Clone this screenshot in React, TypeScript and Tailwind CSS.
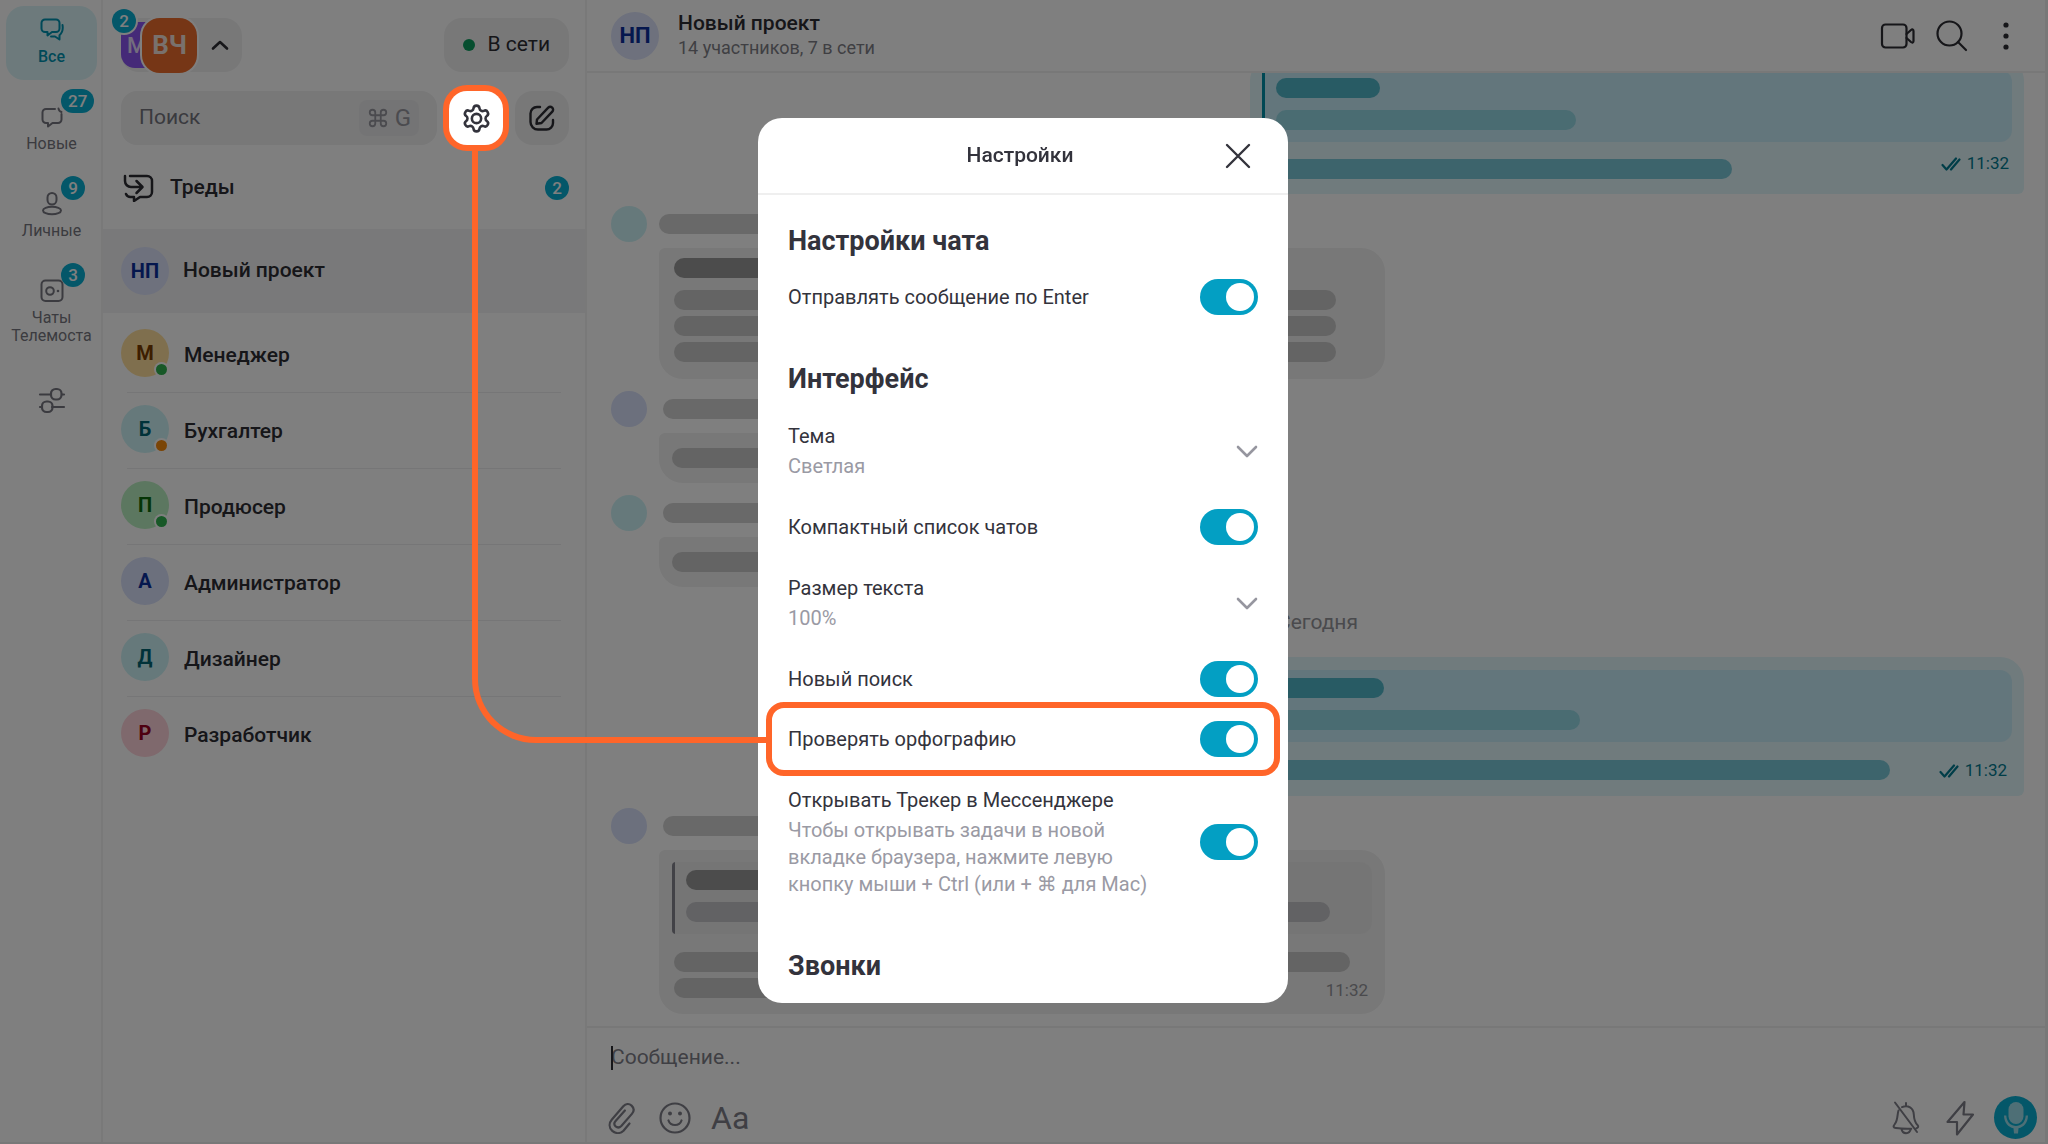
import { useState } from 'react'
import type { ReactNode } from 'react'
import clsx from 'clsx'

interface Chat {
  initials: string
  name: string
  color: string
  status?: string
}

const chats: Chat[] = [
  { initials: 'М', name: 'Менеджер', color: 'bg-[#ffdf9c] text-[#7a3c00]', status: 'bg-[#2fb14f]' },
  { initials: 'Б', name: 'Бухгалтер', color: 'bg-[#cdf3f6] text-[#006472]', status: 'bg-[#f58a0c]' },
  { initials: 'П', name: 'Продюсер', color: 'bg-[#b9efc0] text-[#0a6a0a]', status: 'bg-[#2fb14f]' },
  { initials: 'А', name: 'Администратор', color: 'bg-[#d8e0fb] text-[#0b2f9c]' },
  { initials: 'Д', name: 'Дизайнер', color: 'bg-[#cdf3f6] text-[#006472]' },
  { initials: 'Р', name: 'Разработчик', color: 'bg-[#ffd2da] text-[#9c0022]' },
]

interface IconProps {
  children: ReactNode
  size?: string
  box?: string
  stroke?: number
}

function Icon({ children, size = 'size-6', box = '0 0 24 24', stroke = 2 }: IconProps) {
  return (
    <svg
      viewBox={box}
      className={clsx('shrink-0', size)}
      fill="none"
      stroke="currentColor"
      strokeWidth={stroke}
      strokeLinecap="round"
      strokeLinejoin="round"
      aria-hidden="true"
    >
      {children}
    </svg>
  )
}

function Badge({ children, className }: { children: ReactNode; className?: string }) {
  return (
    <span
      className={clsx(
        'flex h-6 min-w-6 items-center justify-center rounded-full bg-[#08afd2] text-[17px] leading-6 font-medium text-white',
        className,
      )}
    >
      {children}
    </span>
  )
}

interface RailItemProps {
  label: string
  icon: ReactNode
  count?: number
  active?: boolean
}

function RailItem({ label, icon, count, active }: RailItemProps) {
  return (
    <button
      className={clsx(
        'relative flex min-h-[74px] w-full flex-col items-center gap-1.5 rounded-[18px] pt-3 text-base leading-[18px]',
        active ? 'bg-[#daf5f9] font-medium text-[#0092b0]' : 'text-[#777780]',
      )}
    >
      {icon}
      <span>{label}</span>
      {count && <Badge className="absolute -top-1 left-[55px] px-[7px]">{count}</Badge>}
    </button>
  )
}

function Rail() {
  return (
    <nav className="flex w-[103px] shrink-0 flex-col gap-[13px] border-r-2 border-[#f2f2f2] pt-1.5 pr-1 pl-1.5">
      <RailItem
        active
        label="Все"
        icon={
          <Icon>
            <path d="M5 1.5h11a3.5 3.5 0 0 1 3.5 3.5v5.5a3.5 3.5 0 0 1-3.5 3.5h-4l-4.500 3.500v-3.500H5A3.500 3.500 0 0 1 1.500 10.500V5A3.500 3.500 0 0 1 5 1.500z" />
            <path d="M22.500 7c.7 4.500.6 7.500-3 10.200V21.500l-4.500-3h-4" />
          </Icon>
        }
      />
      <RailItem
        label="Новые"
        count={27}
        icon={
          <Icon>
            <path d="M15 4H6a3.500 3.500 0 0 0-3.500 3.500v7A3.500 3.500 0 0 0 6 18h2v3.500l4.500-3.500H18a3.500 3.500 0 0 0 3.500-3.500V9" />
            <path d="M18.500 3.500c.2 1.800 1 2.800 3 3.500" />
          </Icon>
        }
      />
      <RailItem
        label="Личные"
        count={9}
        icon={
          <Icon>
            <rect x="7.500" y="1" width="9" height="11.500" rx="4.500" />
            <ellipse cx="12" cy="18.500" rx="9" ry="3.800" />
          </Icon>
        }
      />
      <RailItem
        label="Чаты Телемоста"
        count={3}
        icon={
          <Icon>
            <rect x="1.500" y="1.500" width="21" height="20.500" rx="4" />
            <circle cx="10" cy="12" r="3.800" />
            <circle cx="18" cy="12" r="1.300" fill="currentColor" stroke="none" />
          </Icon>
        }
      />
      <button className="mt-7 flex justify-center text-[#777780]" aria-label="Настроить папки">
        <Icon size="size-7" box="0 0 28 28" stroke={2.2}>
          <path d="M2 8.500h11M24 8.500h2M2 21h1M14 21h12" />
          <rect x="13" y="3" width="10.500" height="10.500" rx="4.500" />
          <rect x="4" y="15.500" width="10.500" height="10.500" rx="4.500" />
        </Icon>
      </button>
    </nav>
  )
}

function SidebarHeader() {
  return (
    <div className="flex flex-col gap-[19px] pt-[18px] pr-4 pl-[18px]">
      <div className="flex items-center justify-between">
        <button
          className="relative flex h-[54px] w-[121px] items-center rounded-[18px] bg-[#f0f0f1] text-[#2c2c33]"
          aria-label="Аккаунты"
        >
          <span className="flex h-[46px] w-[27px] items-center overflow-hidden rounded-l-[14px] bg-[#8a54f0] pl-1.5 text-[22px] font-medium text-[#e6dcfb]">
            М
          </span>
          <span className="-ml-[6px] flex size-[55px] shrink-0 items-center justify-center rounded-[18px] bg-[#ed6c2c] text-[26px] font-bold text-[#f2e2da] ring-2 ring-white">
            ВЧ
          </span>
          <span className="ml-3.5">
            <Icon size="w-[18px] h-3" box="0 0 18 12" stroke={2.6}>
              <path d="M2 9.500L9 3l7 6.500" />
            </Icon>
          </span>
          <Badge className="absolute -top-[9px] -left-[9px] ring-2 ring-white">2</Badge>
        </button>
        <button className="flex h-[54px] items-center gap-3 rounded-[18px] bg-[#f0f0f1] px-[19px] text-[21px] text-[#2c2c33]">
          <span className="size-3 rounded-full bg-[#0c9c5e]" />
          В сети
        </button>
      </div>

      <div className="flex items-center gap-3">
        <div className="flex h-[54px] min-w-0 flex-1 items-center rounded-[16px] bg-[#f0f0f1] pr-[18px] pl-[18px]">
          <input
            type="search"
            aria-label="Поиск"
            placeholder="Поиск"
            className="min-w-0 flex-1 bg-transparent text-[21px] outline-none placeholder:text-[#74747d]"
          />
          <kbd className="flex h-9 items-center gap-1.5 rounded-lg bg-[#e9e9eb] px-2 font-[Roboto,'DejaVu_Sans',sans-serif] text-2xl text-[#97979f]">
            <Icon size="size-[22px]" box="0 0 24 24">
              <path d="M15 6v12a3 3 0 1 0 3-3H6a3 3 0 1 0 3 3V6a3 3 0 1 0-3 3h12a3 3 0 1 0-3-3" />
            </Icon>
            G
          </kbd>
        </div>
        <button
          className="relative z-20 flex size-[54px] items-center justify-center rounded-[18px] bg-white text-[#33333c] ring-6 ring-[#ff6529]"
          aria-label="Настройки"
        >
          <Icon size="size-[31px]">
            <path d="M9.671 4.136a2.340 2.340 0 0 1 4.659 0 2.340 2.340 0 0 0 3.319 1.915 2.340 2.340 0 0 1 2.330 4.033 2.340 2.340 0 0 0 0 3.831 2.340 2.340 0 0 1-2.330 4.033 2.340 2.340 0 0 0-3.319 1.915 2.340 2.340 0 0 1-4.659 0 2.340 2.340 0 0 0-3.320-1.915 2.340 2.340 0 0 1-2.330-4.033 2.340 2.340 0 0 0 0-3.831A2.340 2.340 0 0 1 6.350 6.051a2.340 2.340 0 0 0 3.319-1.915" />
            <circle cx="12" cy="12" r="3.600" />
          </Icon>
        </button>
        <button
          className="flex size-[54px] items-center justify-center rounded-[18px] bg-[#f0f0f1] text-[#2c2c33]"
          aria-label="Новый чат"
        >
          <Icon size="size-7" box="0 0 28 28" stroke={2.4}>
            <path d="M12 3H9a6.500 6.500 0 0 0-6.500 6.500V18A7.500 7.500 0 0 0 10 25.500h8.500A6.500 6.500 0 0 0 25 19v-3" />
            <path d="M9 15.500L20.200 3.700a2.800 2.800 0 0 1 4.100 3.900L13.500 19 8.500 19.800z" />
          </Icon>
        </button>
      </div>
    </div>
  )
}

function ChatList() {
  return (
    <div className="mt-4 text-[21px] font-medium text-[#2c2c33]">
      <button className="flex h-[68px] w-full items-center pr-4 pb-3.5 pl-[18px]">
        <Icon size="w-8 h-7 ml-0.5" box="0 0 32 28" stroke={2.5}>
          <path d="M7 2h17a5 5 0 0 1 5 5v11a5 5 0 0 1-5 5h-7l-6 4v-4H8a5 5 0 0 1-5-3" />
          <path d="M2 2v5a6 6 0 0 0 6 6h11M13.500 7l6 6-6 6" />
        </Icon>
        <span className="ml-[15px]">Треды</span>
        <Badge className="ml-auto">2</Badge>
      </button>

      <button className="flex h-[84px] w-full items-center gap-3.5 bg-[#f3f3f4] px-[18px]">
        <span className="flex size-12 items-center justify-center rounded-full bg-[#dce2fb] text-xl font-bold text-[#0b2f9c]">
          НП
        </span>
        Новый проект
      </button>

      <ul className="mt-1">
        {chats.map((chat, i) => (
          <li key={chat.name} className="relative">
            <button className="flex h-[76px] w-full items-center gap-[15px] px-[18px]">
              <span
                className={clsx(
                  'relative mt-3 flex size-12 items-center justify-center self-start rounded-full text-xl font-bold',
                  chat.color,
                )}
              >
                {chat.initials}
                {chat.status && (
                  <span className={clsx('absolute right-0.5 bottom-0.5 size-[11px] rounded-full ring-2 ring-white', chat.status)} />
                )}
              </span>
              <span className="pt-0.5">{chat.name}</span>
            </button>
            {i < chats.length - 1 && <hr className="absolute right-6 bottom-0 left-6 border-[#ececee]" />}
          </li>
        ))}
      </ul>
    </div>
  )
}

function Pill({ className }: { className: string }) {
  return <div className={clsx('h-5 shrink-0 rounded-full', className)} />
}

function Quote({ accent, children }: { accent: string; children: ReactNode }) {
  return (
    <div className={clsx('flex h-[72px] overflow-hidden rounded-l-[4px] rounded-r-xl', accent)}>
      <div className="w-[3px] shrink-0 bg-current" />
      <div className="flex flex-col gap-3 pt-2 pl-[11px]">{children}</div>
    </div>
  )
}

function Incoming({ avatar, name, bubble, children }: { avatar: string; name: string; bubble: string; children: ReactNode }) {
  return (
    <article className="flex items-start gap-3">
      <div className={clsx('size-9 shrink-0 rounded-full', avatar)} />
      <div className="flex min-w-0 flex-col">
        <Pill className={clsx('mt-2 bg-[#d2d2d2]', name)} />
        <div className={clsx('mt-3.5 max-w-full rounded-[24px] rounded-tl-md bg-[#f0f0f0]', bubble)}>{children}</div>
      </div>
    </article>
  )
}

function Outgoing({ author, quote, text, time }: { author: string; quote: string; text: string; time: string }) {
  return (
    <article className="w-[774px] max-w-full self-end rounded-[24px] rounded-br-md bg-[#e0f6fa] px-3 pt-[13px] pb-[15px]">
      <Quote accent="bg-[#c7ecf8] text-[#0090a8]">
        <Pill className={clsx('bg-[#51b7c9]', author)} />
        <Pill className={clsx('bg-[#94d8e4]', quote)} />
      </Quote>
      <div className="mt-[17px] flex items-center justify-between">
        <Pill className={clsx('bg-[#7bc9d9]', text)} />
        <div className={clsx('flex h-5 items-center gap-1.5 text-[17px] text-[#007a90]', time)}>
          <Icon size="w-5 h-3.5" box="0 0 20 14" stroke={2.2}>
            <path d="M1.500 8L5.500 12.500 15 1.500M10 12.500L18.500 2.500" />
          </Icon>
          <time>11:32</time>
        </div>
      </div>
    </article>
  )
}

function Conversation() {
  return (
    <section className="flex min-h-0 flex-1 flex-col justify-end gap-3 overflow-hidden pr-[21px] pb-3 pl-6">
      <Outgoing author="w-[104px]" quote="w-[300px]" text="w-[470px]" time="-mt-2.5 mr-[3px]" />

      <Incoming avatar="bg-[#cdf3f6]" name="w-[240px]" bubble="flex h-[131px] w-[726px] flex-col gap-1.5 pt-2.5 pl-[15px]">
        <Pill className="mb-1.5 w-[220px] bg-[#999]" />
        <Pill className="w-[662px] bg-[#c8c8c8]" />
        <Pill className="w-[662px] bg-[#c8c8c8]" />
        <Pill className="w-[662px] bg-[#c8c8c8]" />
      </Incoming>

      <Incoming avatar="bg-[#d8e0fb]" name="ml-1 w-[240px]" bubble="w-[420px] px-[13px] py-[15px]">
        <Pill className="w-full bg-[#c8c8c8]" />
      </Incoming>

      <Incoming avatar="bg-[#cdf3f6]" name="ml-1 w-[240px]" bubble="w-[420px] px-[13px] py-[15px]">
        <Pill className="w-full bg-[#c8c8c8]" />
      </Incoming>

      <p className="py-[9px] text-center text-[21px] leading-7 text-[#94949a]">Сегодня</p>

      <Outgoing author="w-[108px]" quote="w-[304px]" text="w-[628px]" time="mt-0.5 mr-[5px]" />

      <Incoming avatar="bg-[#d8e0fb]" name="ml-1 w-[240px]" bubble="h-[164px] w-[726px] px-[13px] pt-3">
        <Quote accent="bg-[#ebebeb] text-[#84848f]">
          <Pill className="w-[220px] bg-[#999]" />
          <Pill className="w-[644px] bg-[#c4c4c8]" />
        </Quote>
        <div className="mt-[18px] ml-0.5 flex flex-col gap-1.5">
          <Pill className="w-[676px] bg-[#c8c8c8]" />
          <div className="flex items-center justify-between pr-1">
            <Pill className="w-[440px] bg-[#c8c8c8]" />
            <time className="h-5 text-[17px] text-[#94949a]">11:32</time>
          </div>
        </div>
      </Incoming>
    </section>
  )
}

function ChatHeader() {
  return (
    <header className="flex h-[73px] shrink-0 items-center border-b-2 border-[#f0f0f0] pr-[21px] pl-6 text-[#2c2c33]">
      <span className="flex size-12 items-center justify-center rounded-full bg-[#dce2fb] text-[22px] font-bold text-[#0b2f9c]">
        НП
      </span>
      <div className="ml-[19px]">
        <h1 className="text-[21px] leading-6 font-medium">Новый проект</h1>
        <p className="pt-px text-lg leading-6 text-[#7e7e86]">14 участников, 7 в сети</p>
      </div>
      <div className="ml-auto flex items-center gap-5">
        <button aria-label="Видеозвонок">
          <Icon size="size-9" box="0 0 36 36" stroke={2.2}>
            <rect x="2" y="6.500" width="24.500" height="23" rx="3.500" />
            <path d="M26.500 16l4.500-4c1.300-1 2.500-.5 2.500 1v10c0 1.500-1.200 2-2.500 1l-4.500-4" />
          </Icon>
        </button>
        <button aria-label="Поиск по чату">
          <Icon size="size-8" box="0 0 32 32" stroke={2.2}>
            <circle cx="13.500" cy="13.500" r="12" />
            <path d="M22 22l8 8" />
          </Icon>
        </button>
        <button aria-label="Меню">
          <Icon size="size-9" box="0 0 36 36" stroke={0}>
            <circle cx="18" cy="7" r="2.600" fill="currentColor" />
            <circle cx="18" cy="18" r="2.600" fill="currentColor" />
            <circle cx="18" cy="29" r="2.600" fill="currentColor" />
          </Icon>
        </button>
      </div>
    </header>
  )
}

function Composer() {
  return (
    <footer className="flex h-[116px] shrink-0 flex-col justify-between border-t-2 border-[#f0f0f0] pt-4 pr-2 pb-[3px] pl-5 text-[#7e7e88]">
      <div className="relative pl-1">
        <span className="absolute top-0.5 left-1 h-6 w-0.5 bg-[#2c2c33]" />
        <input
          type="text"
          aria-label="Сообщение"
          placeholder="Сообщение..."
          className="block h-7 w-full bg-transparent text-[21px] outline-none placeholder:text-[#7e7e88]"
        />
      </div>
      <div className="flex items-center">
        <button aria-label="Прикрепить файл">
          <Icon size="w-7 h-8" box="0 0 28 32" stroke={2.2}>
            <path d="M22.500 21.500l-6 7.200c-3.400 3.200-8 3-11.200.2-3.400-3.200-3.500-7.800-.4-11.300L16.300 4.300c2.400-2.600 5.800-2.900 8.300-.7 2.500 2.400 2.600 5.600.3 8.300L14.300 24c-1.800 1.800-4 1.800-5.700.4-1.600-1.600-1.600-3.700 0-5.500l9.300-10.400" />
          </Icon>
        </button>
        <button aria-label="Эмодзи" className="ml-6">
          <Icon size="size-8" box="0 0 32 32" stroke={2.2}>
            <circle cx="16" cy="16" r="14.500" />
            <path d="M9.500 18.500c2 6 11 6 13 0" />
            <circle cx="11" cy="11.500" r="2" fill="currentColor" stroke="none" />
            <circle cx="21" cy="11.500" r="2" fill="currentColor" stroke="none" />
          </Icon>
        </button>
        <button aria-label="Форматирование" className="ml-5 text-[32px] leading-9">
          Aa
        </button>
        <button aria-label="Без звука" className="ml-auto">
          <Icon size="w-8 h-9" box="0 0 32 36" stroke={2}>
            <path d="M16 3v3M12 7.200c6-2.700 11.500.8 11.800 7.300.3 5.500 1 8 3.700 10.500 1.600 1.700.3 3-1 3.200M8.500 10.500c-1.500 4-.3 9.500-3.700 13.500-2 2.500-1.300 3.800 1 4 5 .7 10 .9 15.500.7M11.500 29c1 5.500 8 5.500 9.300 0M5 2.500l22 29.500" />
          </Icon>
        </button>
        <button aria-label="Быстрые действия" className="ml-[22px]">
          <Icon size="w-8 h-9" box="0 0 32 36" stroke={2.2}>
            <path d="M20.500 2L3.500 22h9.500v12.500L29 14.500h-9.500z" />
          </Icon>
        </button>
        <button
          aria-label="Голосовое сообщение"
          className="ml-[18px] flex size-[43px] items-center justify-center rounded-full bg-[#08afd2] text-white/60"
        >
          <svg viewBox="0 0 32 36" className="h-9 w-8" fill="currentColor" aria-hidden="true">
            <rect x="8.500" y="2" width="15" height="22" rx="7.500" />
            <path d="M4 15.500h2.300c.7 14 18.700 14 19.400 0H28c-.2 7.500-4.300 11.700-9.500 12.700L18 33.500h-4l-.5-5.300C8.300 27.200 4.200 23 4 15.500z" />
          </svg>
        </button>
      </div>
    </footer>
  )
}

function ToggleRow({ id, label, hint, highlighted }: { id: string; label: string; hint?: string; highlighted?: boolean }) {
  const [enabled, setEnabled] = useState(true)

  return (
    <div className={clsx('relative flex items-center justify-between', hint ? 'pt-4 pb-[18px]' : 'h-[60px]')}>
      {highlighted && (
        <div className="pointer-events-none absolute -inset-x-[22px] -inset-y-[7px] rounded-[18px] border-6 border-[#ff6529]" />
      )}
      <div>
        <label htmlFor={id} className="block leading-[30px]">
          {label}
        </label>
        {hint && <p className="mt-0.5 w-[375px] leading-[27px] text-[#9a9aa4]">{hint}</p>}
      </div>
      <input
        id={id}
        type="checkbox"
        role="switch"
        checked={enabled}
        onChange={(e) => setEnabled(e.target.checked)}
        className="h-9 w-[58px] shrink-0 cursor-pointer appearance-none rounded-full bg-gray-300 p-1 transition-colors before:block before:size-7 before:rounded-full before:bg-white checked:bg-[#039fc3] checked:before:ml-auto"
      />
    </div>
  )
}

function SelectRow({ id, label, options }: { id: string; label: string; options: string[] }) {
  return (
    <div className="flex items-center justify-between pt-4 pb-[18px]">
      <div className="flex flex-1 flex-col">
        <label htmlFor={id} className="leading-[30px]">
          {label}
        </label>
        <select id={id} className="mt-0.5 h-[26px] cursor-pointer appearance-none bg-transparent leading-[26px] text-[#9a9aa4] outline-none">
          {options.map((option) => (
            <option key={option}>{option}</option>
          ))}
        </select>
      </div>
      <span className="pt-1 text-[#96969f]">
        <Icon size="w-[22px] h-3.5" box="0 0 22 14" stroke={2.6}>
          <path d="M2 2l9 9 9-9" />
        </Icon>
      </span>
    </div>
  )
}

function SettingsDialog() {
  return (
    <div className="fixed inset-0 z-30 flex items-start justify-center pt-[118px] pr-0.5">
      <div
        role="dialog"
        aria-modal="true"
        aria-labelledby="settings-title"
        className="w-[530px] rounded-[24px] bg-white text-xl text-[#33333c]"
      >
        <header className="relative flex h-[77px] items-center justify-center border-b-2 border-[#efefef] pr-1.5">
          <h2 id="settings-title" className="text-[21px] font-medium">
            Настройки
          </h2>
          <button aria-label="Закрыть" className="absolute right-[37px]">
            <Icon size="size-[26px]" box="0 0 26 26" stroke={2.4}>
              <path d="M2 2l22 22M24 2L2 24" />
            </Icon>
          </button>
        </header>

        <div className="px-[30px] pt-7 pb-[19px]">
          <h3 className="mb-2 text-[27px] leading-9 font-bold">Настройки чата</h3>
          <ToggleRow id="send-enter" label="Отправлять сообщение по Enter" />

          <h3 className="mt-[34px] mb-2 text-[27px] leading-9 font-bold">Интерфейс</h3>
          <SelectRow id="theme" label="Тема" options={['Светлая', 'Тёмная']} />
          <ToggleRow id="compact" label="Компактный список чатов" />
          <SelectRow id="text-size" label="Размер текста" options={['100%', '125%', '150%']} />
          <ToggleRow id="new-search" label="Новый поиск" />
          <ToggleRow id="spelling" label="Проверять орфографию" highlighted />
          <ToggleRow
            id="tracker"
            label="Открывать Трекер в Мессенджере"
            hint="Чтобы открывать задачи в новой вкладке браузера, нажмите левую кнопку мыши + Ctrl (или + ⌘ для Mac)"
          />

          <h3 className="mt-8 text-[27px] leading-9 font-bold">Звонки</h3>
        </div>
      </div>
    </div>
  )
}

export default function App() {
  return (
    <div className="flex h-screen overflow-hidden border-r-3 border-b-2 border-[#f0f0f0] bg-white font-[Roboto,'DejaVu_Sans',sans-serif]">
      <Rail />
      <aside className="w-[484px] shrink-0 border-r-2 border-[#f2f2f2]">
        <SidebarHeader />
        <ChatList />
      </aside>
      <main className="flex min-w-0 flex-1 flex-col">
        <ChatHeader />
        <Conversation />
        <Composer />
      </main>

      <div className="fixed inset-0 z-10 bg-black/50" />
      <SettingsDialog />
      {/* Line from the gear button to the highlighted setting */}
      <div className="pointer-events-none absolute top-[151px] left-[472px] z-40 h-[592px] w-[296px] rounded-bl-[64px] border-b-6 border-l-6 border-[#ff6529]" />
    </div>
  )
}
